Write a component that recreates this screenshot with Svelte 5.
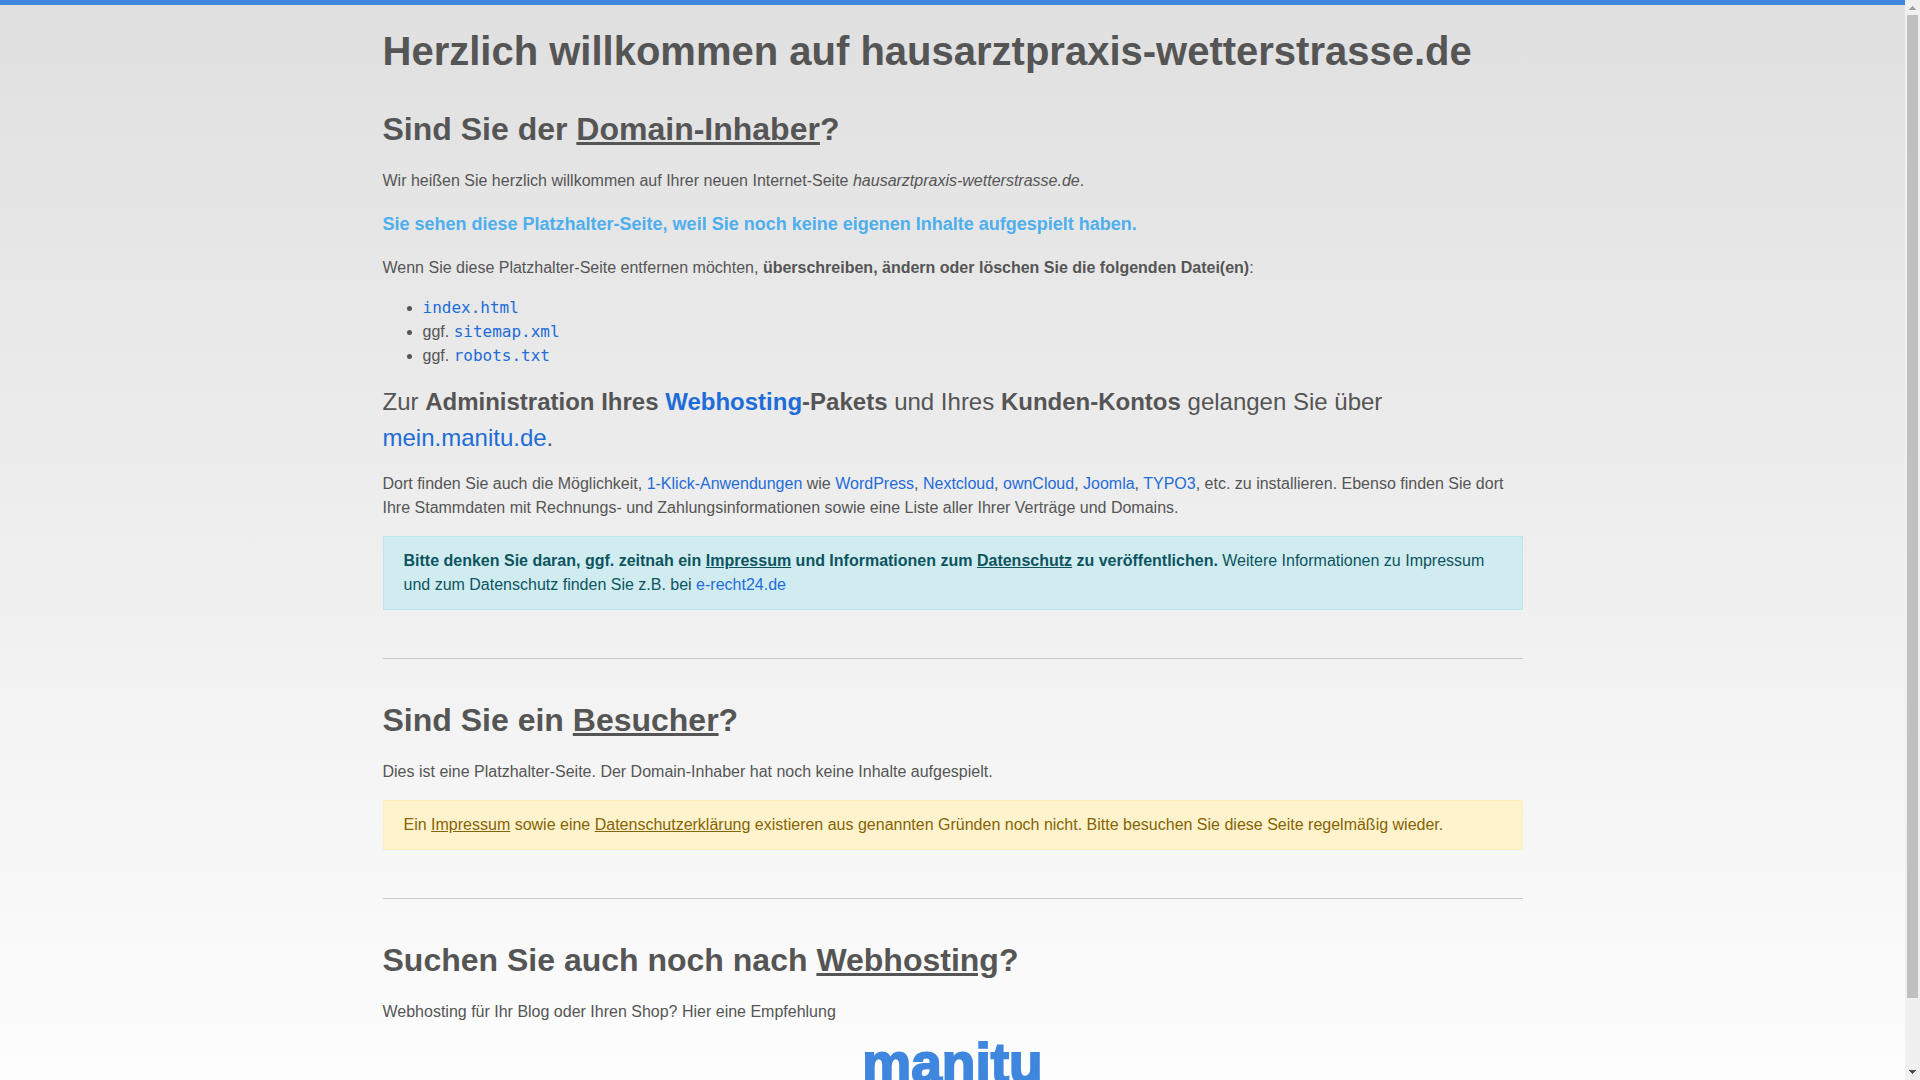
<script lang="ts">
	const domain = 'hausarztpraxis-wetterstrasse.de';

	const files = [
		{ name: 'index.html', optional: false },
		{ name: 'sitemap.xml', optional: true },
		{ name: 'robots.txt', optional: true }
	];

	const apps = ['WordPress', 'Nextcloud', 'ownCloud', 'Joomla', 'TYPO3'];
</script>

<div class="viewport">
	<div class="scroller">
		<div class="page">
			<main class="container">
				<h1>Herzlich willkommen auf {domain}</h1>

				<section>
					<h2>Sind Sie der <u>Domain-Inhaber</u>?</h2>
					<p>Wir heißen Sie herzlich willkommen auf Ihrer neuen Internet-Seite <em>{domain}</em>.</p>
					<p class="notice">Sie sehen diese Platzhalter-Seite, weil Sie noch keine eigenen Inhalte aufgespielt haben.</p>
					<p>Wenn Sie diese Platzhalter-Seite entfernen möchten, <strong>überschreiben, ändern oder löschen Sie die folgenden Datei(en)</strong>:</p>
					<ul>
						{#each files as file}
							<li>{file.optional ? 'ggf. ' : ''}<code>{file.name}</code></li>
						{/each}
					</ul>
					<p class="lead">
						Zur <strong>Administration Ihres <a href="#webhosting">Webhosting</a>-Pakets</strong> und Ihres <strong>Kunden-Kontos</strong> gelangen Sie über <a href="#mein">mein.manitu.de</a>.
					</p>
					<p>
						Dort finden Sie auch die Möglichkeit, <a href="#apps">1-Klick-Anwendungen</a> wie
						{#each apps as app}<a href="#{app}">{app}</a>,{' '}{/each}etc. zu installieren. Ebenso finden Sie dort Ihre Stammdaten mit Rechnungs- und Zahlungsinformationen sowie eine Liste aller Ihrer Verträge und Domains.
					</p>
					<div class="alert info">
						<strong>Bitte denken Sie daran, ggf. zeitnah ein <u>Impressum</u> und Informationen zum <u>Datenschutz</u> zu veröffentlichen.</strong> Weitere Informationen zu Impressum und zum Datenschutz finden Sie z.B. bei <a href="#recht">e-recht24.de</a>
					</div>
				</section>

				<hr />

				<section>
					<h2>Sind Sie ein <u>Besucher</u>?</h2>
					<p>Dies ist eine Platzhalter-Seite. Der Domain-Inhaber hat noch keine Inhalte aufgespielt.</p>
					<div class="alert warning">
						Ein <u>Impressum</u> sowie eine <u>Datenschutzerklärung</u> existieren aus genannten Gründen noch nicht. Bitte besuchen Sie diese Seite regelmäßig wieder.
					</div>
				</section>

				<hr />

				<section id="webhosting">
					<h2>Suchen Sie auch noch nach <u>Webhosting</u>?</h2>
					<p>Webhosting für Ihr Blog oder Ihren Shop? Hier eine Empfehlung</p>
					<a class="logo" href="#manitu">manitu</a>
				</section>
			</main>
		</div>
	</div>

	<div class="scrollbar" aria-hidden="true">
		<svg class="arrow up" viewBox="0 0 15 15" shape-rendering="crispEdges"><path d="M7 6h1v1h1v1h1v1h1v1H4V9h1V8h1V7h1z" /></svg>
		<div class="track"><div class="thumb"></div></div>
		<svg class="arrow" viewBox="0 0 15 15" shape-rendering="crispEdges"><path d="M4 5h7v1h-1v1H9v1H8v1H7V8H6V7H5V6H4z" /></svg>
	</div>
</div>

<style>
	:global(body) {
		margin: 0;
		font-family: 'Liberation Sans', Arial, sans-serif;
		font-size: 16px;
		line-height: 24px;
		color: #555;
	}

	.viewport {
		display: grid;
		grid-template-columns: 1fr 15px;
		height: 100vh;
	}

	.scroller {
		overflow-y: auto;
		scrollbar-width: none;
		min-height: 0;
	}

	.page {
		box-sizing: border-box;
		min-height: 100%;
		border-top: 5px solid #3f86de;
		background: linear-gradient(#e0e0e0, #fff);
	}

	.container {
		max-width: 1140px;
		margin: 0 auto;
		padding: 16px 0 64px;
	}

	h1,
	h2 {
		margin: 0 0 16px;
		font-weight: 700;
	}

	h1 {
		margin-bottom: 24px;
		font-size: 40px;
		line-height: 60px;
	}

	h2 {
		font-size: 32px;
		line-height: 48px;
	}

	p,
	ul {
		margin: 0 0 16px;
	}

	ul {
		padding-left: 40px;
	}

	a,
	code {
		color: #1e6cd8;
		text-decoration: none;
	}

	code {
		font-family: 'DejaVu Sans Mono', monospace;
		font-size: 16px;
	}

	.notice {
		font-size: 18px;
		line-height: 31px;
		font-weight: 700;
		color: #4eafed;
	}

	.lead {
		font-size: 24px;
		line-height: 36px;
	}

	.alert {
		padding: 12px 20px;
		border: 1px solid;
	}

	.info {
		color: #0c5460;
		background: #d1ecf1;
		border-color: #bee5eb;
	}

	.warning {
		color: #856404;
		background: #fff3cd;
		border-color: #ffeeba;
	}

	hr {
		margin: 48px 0 37px;
		border: 0;
		border-top: 1px solid #c8cacb;
	}

	.logo {
		display: block;
		font-size: 55px;
		line-height: 46px;
		font-weight: 700;
		text-align: center;
		color: #3f86de;
		-webkit-text-stroke: 2px #3f86de;
	}

	.scrollbar {
		display: flex;
		flex-direction: column;
		background: #f0f0f0;
	}

	.track {
		flex: 1;
		padding: 0 2px;
	}

	.thumb {
		height: 93.6%;
		background: #c0c0c0;
	}

	.arrow {
		width: 15px;
		height: 15px;
		fill: #505050;
	}

	.up {
		fill: #a0a0a0;
	}
</style>
